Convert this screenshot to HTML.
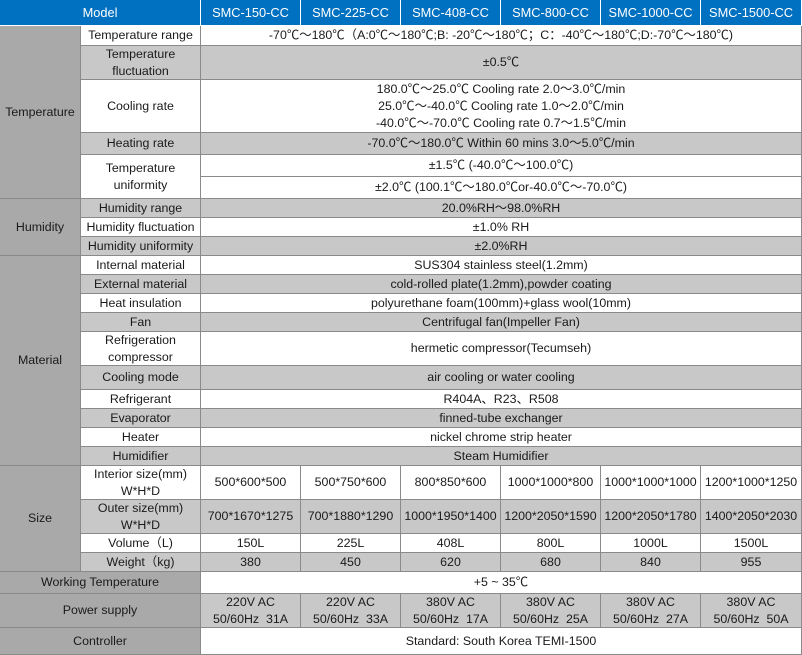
<!DOCTYPE html>
<html><head><meta charset="utf-8"><style>
*{margin:0;padding:0;box-sizing:border-box}
body{width:802px;height:655px;overflow:hidden;background:#fff;font-family:"Liberation Sans","Noto Sans CJK SC",sans-serif;font-size:12.4px;color:#1a1a1a}
.c{position:absolute;display:flex;align-items:center;justify-content:center;text-align:center;line-height:17px;border-right:1px solid #8a8a8a;border-bottom:1px solid #8a8a8a;white-space:nowrap}
.h{background:#0070c0;color:#fff;border-color:#fff;font-size:12.8px}
.k{background:#a9a9a9}
.g{background:#c8c8c8}
.w{background:#fff}
</style></head><body>
<div class="c h" style="left:0;top:0;width:201px;height:26px">Model</div>
<div class="c h" style="left:201px;top:0;width:100px;height:26px">SMC-150-CC</div>
<div class="c h" style="left:301px;top:0;width:100px;height:26px">SMC-225-CC</div>
<div class="c h" style="left:401px;top:0;width:100px;height:26px">SMC-408-CC</div>
<div class="c h" style="left:501px;top:0;width:100px;height:26px">SMC-800-CC</div>
<div class="c h" style="left:601px;top:0;width:100px;height:26px">SMC-1000-CC</div>
<div class="c h" style="left:701px;top:0;width:101px;height:26px">SMC-1500-CC</div>

<div class="c k" style="left:0;top:26px;width:81px;height:173px">Temperature</div>
<div class="c k" style="left:0;top:199px;width:81px;height:57px">Humidity</div>
<div class="c k" style="left:0;top:256px;width:81px;height:210px">Material</div>
<div class="c k" style="left:0;top:466px;width:81px;height:106px">Size</div>
<div class="c k" style="left:0;top:572px;width:201px;height:22px">Working Temperature</div>
<div class="c k" style="left:0;top:594px;width:201px;height:34px">Power supply</div>
<div class="c k" style="left:0;top:628px;width:201px;height:27px">Controller</div>

<div class="c w" style="left:81px;top:26px;width:120px;height:20px">Temperature range</div>
<div class="c w" style="left:201px;top:26px;width:601px;height:20px">-70℃～180℃（A:0℃～180℃;B: -20℃～180℃；C：-40℃～180℃;D:-70℃～180℃)</div>
<div class="c g" style="left:81px;top:46px;width:120px;height:34px">Temperature<br>fluctuation</div>
<div class="c g" style="left:201px;top:46px;width:601px;height:34px">±0.5℃</div>
<div class="c w" style="left:81px;top:80px;width:120px;height:53px">Cooling rate</div>
<div class="c w" style="left:201px;top:80px;width:601px;height:53px">180.0℃～25.0℃ Cooling rate 2.0～3.0℃/min<br>25.0℃～-40.0℃ Cooling rate 1.0～2.0℃/min<br>-40.0℃～-70.0℃ Cooling rate 0.7～1.5℃/min</div>
<div class="c g" style="left:81px;top:133px;width:120px;height:22px">Heating rate</div>
<div class="c g" style="left:201px;top:133px;width:601px;height:22px">-70.0℃～180.0℃ Within 60 mins 3.0～5.0℃/min</div>
<div class="c w" style="left:81px;top:155px;width:120px;height:44px">Temperature<br>uniformity</div>
<div class="c w" style="left:201px;top:155px;width:601px;height:22px">±1.5℃ (-40.0℃～100.0℃)</div>
<div class="c w" style="left:201px;top:177px;width:601px;height:22px">±2.0℃ (100.1℃～180.0℃or-40.0℃～-70.0℃)</div>

<div class="c g" style="left:81px;top:199px;width:120px;height:19px">Humidity range</div>
<div class="c g" style="left:201px;top:199px;width:601px;height:19px">20.0%RH～98.0%RH</div>
<div class="c w" style="left:81px;top:218px;width:120px;height:19px">Humidity fluctuation</div>
<div class="c w" style="left:201px;top:218px;width:601px;height:19px">±1.0% RH</div>
<div class="c g" style="left:81px;top:237px;width:120px;height:19px">Humidity uniformity</div>
<div class="c g" style="left:201px;top:237px;width:601px;height:19px">±2.0%RH</div>

<div class="c w" style="left:81px;top:256px;width:120px;height:19px">Internal material</div>
<div class="c w" style="left:201px;top:256px;width:601px;height:19px">SUS304 stainless steel(1.2mm)</div>
<div class="c g" style="left:81px;top:275px;width:120px;height:19px">External material</div>
<div class="c g" style="left:201px;top:275px;width:601px;height:19px">cold-rolled plate(1.2mm),powder coating</div>
<div class="c w" style="left:81px;top:294px;width:120px;height:19px">Heat insulation</div>
<div class="c w" style="left:201px;top:294px;width:601px;height:19px">polyurethane foam(100mm)+glass wool(10mm)</div>
<div class="c g" style="left:81px;top:313px;width:120px;height:19px">Fan</div>
<div class="c g" style="left:201px;top:313px;width:601px;height:19px">Centrifugal fan(Impeller Fan)</div>
<div class="c w" style="left:81px;top:332px;width:120px;height:34px">Refrigeration<br>compressor</div>
<div class="c w" style="left:201px;top:332px;width:601px;height:34px">hermetic compressor(Tecumseh)</div>
<div class="c g" style="left:81px;top:366px;width:120px;height:24px">Cooling mode</div>
<div class="c g" style="left:201px;top:366px;width:601px;height:24px">air cooling or water cooling</div>
<div class="c w" style="left:81px;top:390px;width:120px;height:19px">Refrigerant</div>
<div class="c w" style="left:201px;top:390px;width:601px;height:19px">R404A、R23、R508</div>
<div class="c g" style="left:81px;top:409px;width:120px;height:19px">Evaporator</div>
<div class="c g" style="left:201px;top:409px;width:601px;height:19px">finned-tube exchanger</div>
<div class="c w" style="left:81px;top:428px;width:120px;height:19px">Heater</div>
<div class="c w" style="left:201px;top:428px;width:601px;height:19px">nickel chrome strip heater</div>
<div class="c g" style="left:81px;top:447px;width:120px;height:19px">Humidifier</div>
<div class="c g" style="left:201px;top:447px;width:601px;height:19px">Steam Humidifier</div>

<div class="c w" style="left:81px;top:466px;width:120px;height:34px">Interior size(mm)<br>W*H*D</div>
<div class="c w" style="left:201px;top:466px;width:100px;height:34px">500*600*500</div>
<div class="c w" style="left:301px;top:466px;width:100px;height:34px">500*750*600</div>
<div class="c w" style="left:401px;top:466px;width:100px;height:34px">800*850*600</div>
<div class="c w" style="left:501px;top:466px;width:100px;height:34px">1000*1000*800</div>
<div class="c w" style="left:601px;top:466px;width:100px;height:34px">1000*1000*1000</div>
<div class="c w" style="left:701px;top:466px;width:101px;height:34px">1200*1000*1250</div>
<div class="c g" style="left:81px;top:500px;width:120px;height:34px">Outer size(mm)<br>W*H*D</div>
<div class="c g" style="left:201px;top:500px;width:100px;height:34px">700*1670*1275</div>
<div class="c g" style="left:301px;top:500px;width:100px;height:34px">700*1880*1290</div>
<div class="c g" style="left:401px;top:500px;width:100px;height:34px">1000*1950*1400</div>
<div class="c g" style="left:501px;top:500px;width:100px;height:34px">1200*2050*1590</div>
<div class="c g" style="left:601px;top:500px;width:100px;height:34px">1200*2050*1780</div>
<div class="c g" style="left:701px;top:500px;width:101px;height:34px">1400*2050*2030</div>
<div class="c w" style="left:81px;top:534px;width:120px;height:19px">Volume（L)</div>
<div class="c w" style="left:201px;top:534px;width:100px;height:19px">150L</div>
<div class="c w" style="left:301px;top:534px;width:100px;height:19px">225L</div>
<div class="c w" style="left:401px;top:534px;width:100px;height:19px">408L</div>
<div class="c w" style="left:501px;top:534px;width:100px;height:19px">800L</div>
<div class="c w" style="left:601px;top:534px;width:100px;height:19px">1000L</div>
<div class="c w" style="left:701px;top:534px;width:101px;height:19px">1500L</div>
<div class="c g" style="left:81px;top:553px;width:120px;height:19px">Weight（kg)</div>
<div class="c g" style="left:201px;top:553px;width:100px;height:19px">380</div>
<div class="c g" style="left:301px;top:553px;width:100px;height:19px">450</div>
<div class="c g" style="left:401px;top:553px;width:100px;height:19px">620</div>
<div class="c g" style="left:501px;top:553px;width:100px;height:19px">680</div>
<div class="c g" style="left:601px;top:553px;width:100px;height:19px">840</div>
<div class="c g" style="left:701px;top:553px;width:101px;height:19px">955</div>

<div class="c w" style="left:201px;top:572px;width:601px;height:22px">+5 ~ 35℃</div>
<div class="c g" style="left:201px;top:594px;width:100px;height:34px">220V AC<br>50/60Hz&nbsp; 31A</div>
<div class="c g" style="left:301px;top:594px;width:100px;height:34px">220V AC<br>50/60Hz&nbsp; 33A</div>
<div class="c g" style="left:401px;top:594px;width:100px;height:34px">380V AC<br>50/60Hz&nbsp; 17A</div>
<div class="c g" style="left:501px;top:594px;width:100px;height:34px">380V AC<br>50/60Hz&nbsp; 25A</div>
<div class="c g" style="left:601px;top:594px;width:100px;height:34px">380V AC<br>50/60Hz&nbsp; 27A</div>
<div class="c g" style="left:701px;top:594px;width:101px;height:34px">380V AC<br>50/60Hz&nbsp; 50A</div>
<div class="c w" style="left:201px;top:628px;width:601px;height:27px">Standard: South Korea TEMI-1500</div>
</body></html>
